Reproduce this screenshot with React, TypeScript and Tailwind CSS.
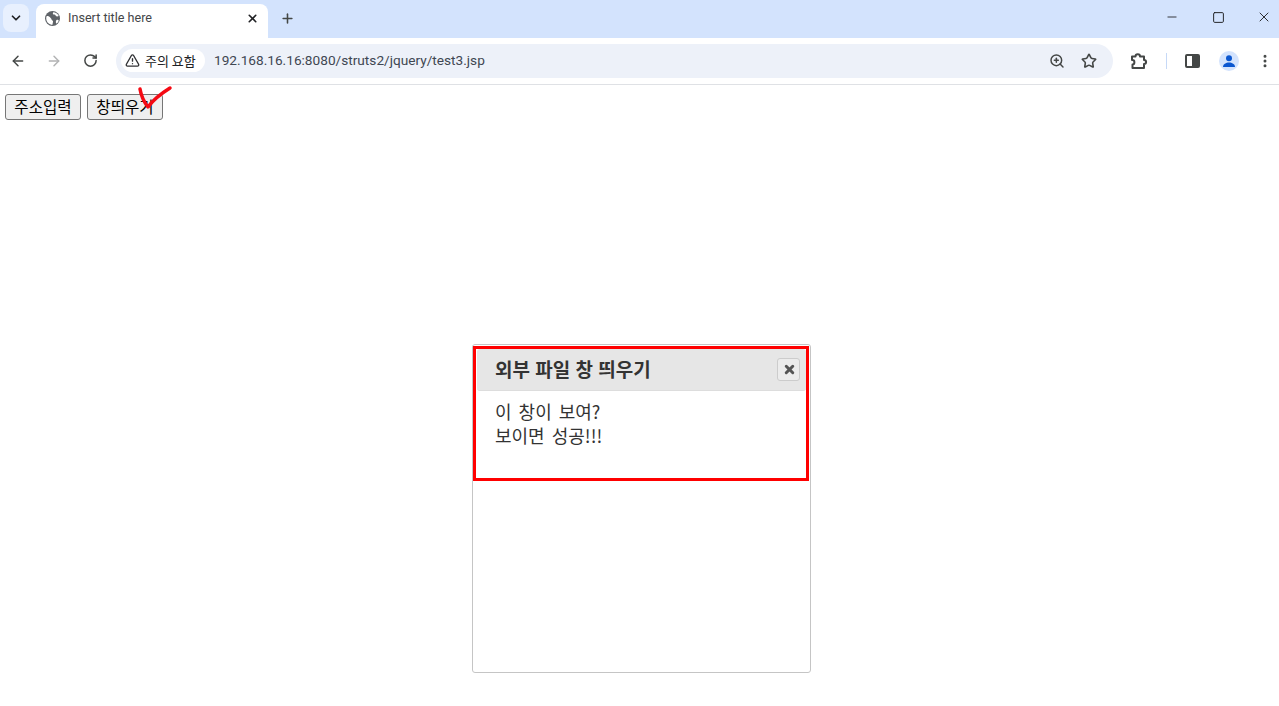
import { ArrowLeft, ArrowRight, Plus, RotateCw, Star, X, ZoomIn, ChevronDown, Minus, Square, TriangleAlert, EllipsisVertical } from "lucide-react";

const korean = { fontFamily: '"Noto Sans CJK KR", "Noto Sans", sans-serif' };

const TabBar = () => (
  <div className="flex h-[38px] items-start bg-[#d3e3fd]">
    <div className="ml-[3px] mt-[4px] flex h-[28px] w-[26px] items-center justify-center rounded-lg bg-[#e8f0fe]">
      <ChevronDown size={14} strokeWidth={3} className="text-[#202124]" />
    </div>
    <div className="ml-[7px] mt-[4px] flex h-[34px] w-[232px] items-center rounded-t-lg bg-white pb-[6px] pl-[9px] pr-[9px]">
      <svg width="15" height="15" viewBox="0 0 24 24" className="shrink-0">
        <circle cx="12" cy="12" r="12" fill="#5f6368" />
        <path d="M3 8c3 0 4 1 6 3s1 3 3 4 0 4 0 7c-5 0-10-4-10-10 0-1 0-3 1-4zM13 2c4 0 7 2 9 6-2 1-4 1-5-1s-3-1-4-2 0-2 0-3zM19 14c1 0 2 0 3 1-1 3-2 4-4 5-1-2-1-5 1-6z" fill="#fff" />
      </svg>
      <span className="ml-[8px] flex-1 text-[12.6px] text-[#45474a]" style={{ fontFamily: '"Roboto", sans-serif' }}>
        Insert title here
      </span>
      <X size={13} strokeWidth={3} className="text-[#202124]" />
    </div>
    <Plus size={15} strokeWidth={2.5} className="ml-[12px] mt-[11px] text-[#444746]" />
    <div className="ml-auto flex h-[34px] items-center text-[#202124]">
      <Minus size={14} strokeWidth={1.5} className="mr-[33px]" />
      <Square size={13} strokeWidth={1.8} className="mr-[31px]" />
      <X size={16} strokeWidth={1.4} className="mr-[7px]" />
    </div>
  </div>
);

const AddressBar = () => (
  <div className="flex h-[47px] items-center border-b border-[#dfe1e5] bg-white pb-[1px]">
    <ArrowLeft size={16} strokeWidth={2.2} className="ml-[10px] text-[#444746]" />
    <ArrowRight size={16} strokeWidth={2.2} className="ml-[20px] text-[#b2b3b4]" />
    <RotateCw size={15} strokeWidth={2.4} className="ml-[21px] text-[#444746]" />
    <div className="ml-[18px] flex h-[34px] w-[997px] items-center rounded-full bg-[#edf1f9] pl-[5px] pr-[16px]">
      <div className="flex h-[23px] w-[84px] items-center rounded-full bg-white pl-[4px]">
        <TriangleAlert size={15} strokeWidth={2.2} className="text-[#303134]" />
        <span className="ml-[5px] text-[13px] leading-none text-[#202124]" style={korean}>
          주의 요함
        </span>
      </div>
      <span className="ml-[9px] flex-1 text-[13.67px] text-[#3f4752]" style={{ fontFamily: '"Roboto", sans-serif' }}>
        192.168.16.16:8080/struts2/jquery/test3.jsp
      </span>
      <ZoomIn size={16} strokeWidth={2.2} className="text-[#444746]" />
      <Star size={16} strokeWidth={2.4} className="ml-[16px] text-[#444746]" />
    </div>
    <svg width="18" height="18" viewBox="0 0 18 18" fill="none" className="ml-[17px]">
      <path
        d="M2 4.500h3.500c0-3 4.500-3 4.500 0H14v3.500c2.800 0 2.800 4 0 4v4H2.500v-3.500c2.500 0 2.500-4.500 0-4.500H2z"
        stroke="#444746"
        strokeWidth="2"
        strokeLinejoin="round"
      />
    </svg>
    <div className="ml-[18px] h-[16px] w-[1px] bg-[#c6d9f7]" />
    <div className="ml-[18px] flex h-[14px] w-[15px] overflow-hidden rounded-[2px] border-2 border-[#444746]">
      <div className="flex-1 bg-white" />
      <div className="w-[6px] bg-[#444746]" />
    </div>
    <div className="ml-[19px] flex h-[20px] w-[20px] items-center justify-center rounded-full bg-[#d3e3fd]">
      <svg width="14" height="14" viewBox="0 0 14 14">
        <circle cx="7" cy="4.200" r="3" fill="#0b57d0" />
        <path d="M1 13c0-3 3-4.500 6-4.500s6 1.500 6 4.500z" fill="#0b57d0" />
      </svg>
    </div>
    <EllipsisVertical size={16} strokeWidth={2.5} className="ml-[18px] text-[#444746]" />
  </div>
);

const PageButton = ({ label }: { label: string }) => (
  <button
    className="h-[26px] w-[76px] rounded-[3px] border border-[#767676] bg-[#efefef] text-[15.6px] leading-none text-black"
    style={korean}
  >
    {label}
  </button>
);

export default function App() {
  return (
    <div className="relative h-[706px] w-[1279px] overflow-hidden bg-white">
      <TabBar />
      <AddressBar />
      <div className="flex gap-[6px] pl-[5px] pt-[9px]">
        <PageButton label="주소입력" />
        <PageButton label="창띄우기" />
      </div>

      {/* hand drawn check mark over the button */}
      <svg className="absolute left-[136px] top-[84px]" width="38" height="28" viewBox="0 0 38 28" fill="none">
        <path d="M4 5c1 6 4 13 8 18C17 16 26 9 34 4" stroke="#f50a14" strokeWidth="3.500" strokeLinecap="round" strokeLinejoin="round" />
      </svg>

      {/* popup */}
      <div className="absolute left-[472px] top-[344px] h-[329px] w-[339px] rounded-[3px] border border-[#c5c5c5] bg-white p-[4px]" style={korean}>
        <div className="flex h-[42px] items-center rounded-[3px] border-b border-[#dddddd] bg-[#e6e6e6] pl-[18px] pr-[6px]">
          <span className="-mt-[3px] flex-1 text-[19px] font-bold leading-none text-[#333333] [word-spacing:1px]">외부 파일 창 띄우기</span>
          <div className="-ml-[1px] -mt-[1px] flex h-[23px] w-[23px] items-center justify-center rounded-[3px] border border-[#cccccc] bg-[#ececec] pl-[1px]">
            <X size={13} strokeWidth={5.500} className="text-[#555555]" />
          </div>
        </div>
        <div className="px-[18px] pt-[8px] text-[18px] leading-[24px] text-[#333333] [word-spacing:3px]">
          <p>이 창이 보여?</p>
          <p>보이면 성공!!!</p>
        </div>
      </div>

      {/* red highlight annotation */}
      <div className="absolute left-[473px] top-[346px] h-[135px] w-[336px] border-[3px] border-[#ff0000]" />
    </div>
  );
}
